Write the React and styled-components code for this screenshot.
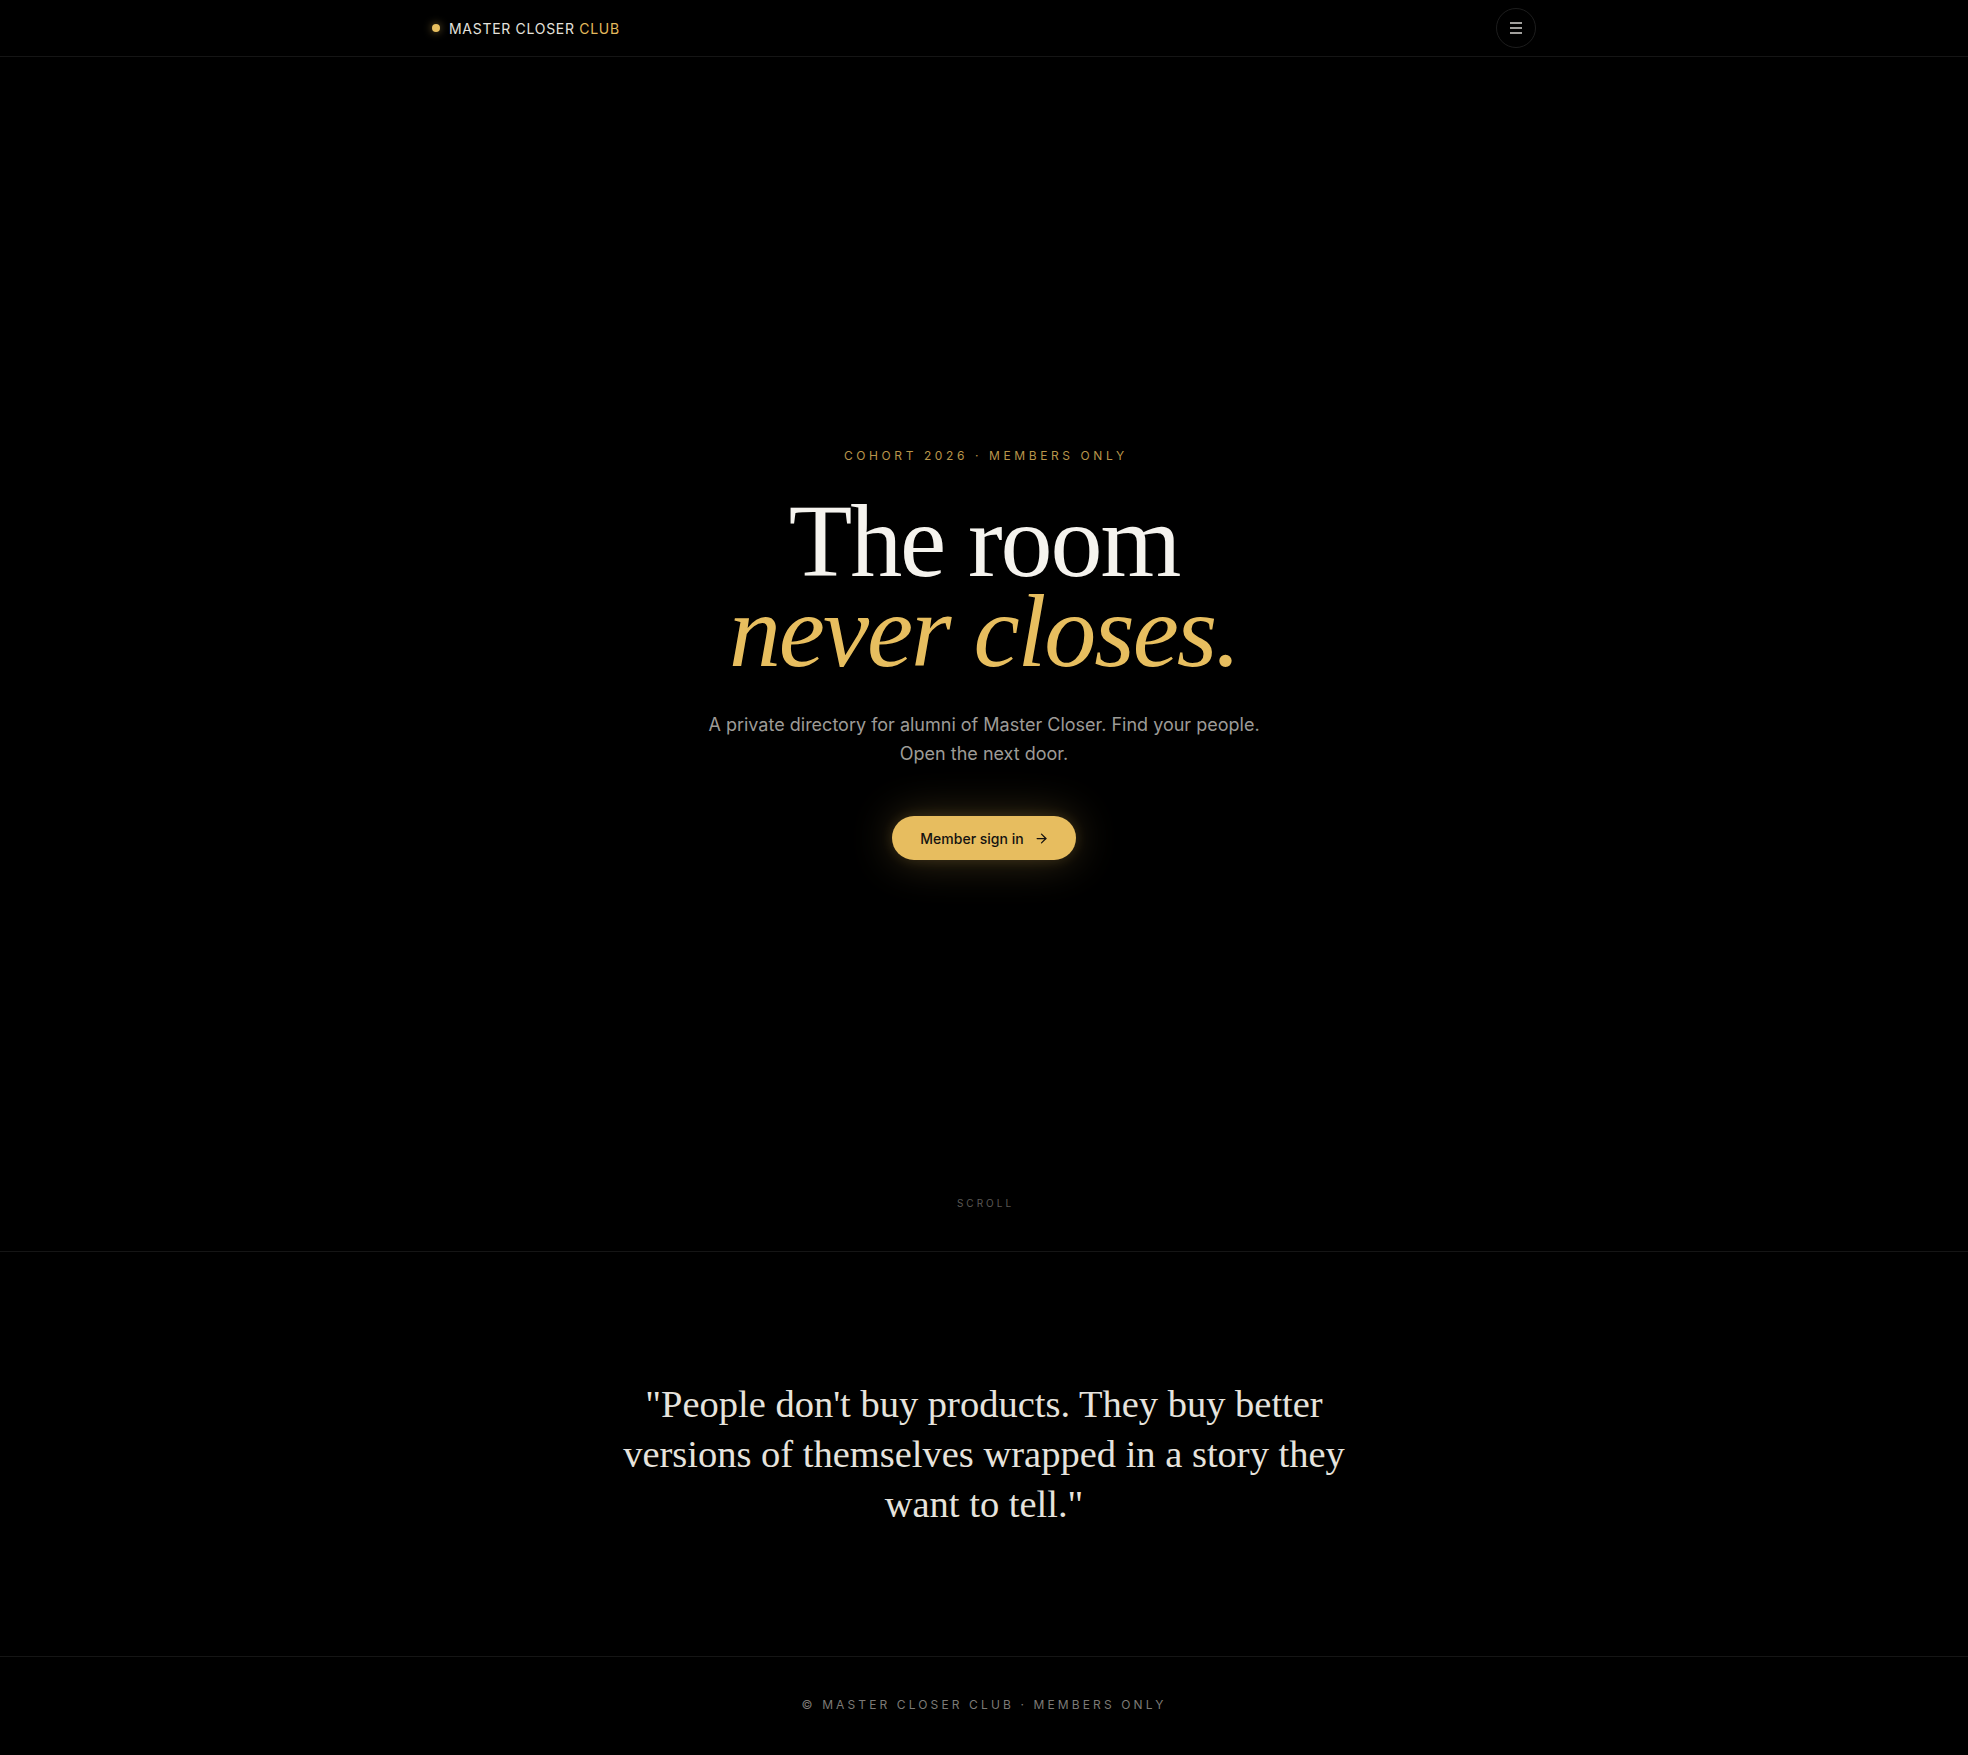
import React from "react";
import styled, { createGlobalStyle } from "styled-components";
import { ArrowRight } from "lucide-react";

const GlobalStyle = createGlobalStyle`
  * {
    box-sizing: border-box;
  }
  body {
    margin: 0;
    background: #000;
    color: #f5f3ee;
    font-family: "Inter", "Noto Sans", sans-serif;
    -webkit-font-smoothing: antialiased;
  }
`;

const MenuIcon = () => (
  <svg width="12" height="12" viewBox="0 0 12 12" fill="none">
    <path d="M0 1h12M0 6h12M0 11h12" stroke="#d6d4cf" strokeWidth="1.4" />
  </svg>
);

export default function App() {
  return (
    <>
      <GlobalStyle />
      <Page>
        <Header>
          <HeaderInner>
            <Brand>
              <BrandDot />
              <BrandName>
                MASTER CLOSER <Gold>CLUB</Gold>
              </BrandName>
            </Brand>
            <MenuButton aria-label="Menu">
              <MenuIcon />
            </MenuButton>
          </HeaderInner>
        </Header>

        <Hero>
          <HeroContent>
            <Eyebrow>COHORT 2026 · MEMBERS ONLY</Eyebrow>
            <Title>
              The room
              <TitleAccent>never closes.</TitleAccent>
            </Title>
            <Lead>
              A private directory for alumni of Master Closer. Find your people.
              Open the next door.
            </Lead>
            <SignInButton>
              Member sign in
              <ArrowRight size={15} strokeWidth={2} />
            </SignInButton>
          </HeroContent>
          <ScrollHint>SCROLL</ScrollHint>
        </Hero>

        <QuoteSection>
          <Quote>
            "People don't buy products. They buy better versions of themselves
            wrapped in a story they want to tell."
          </Quote>
        </QuoteSection>

        <Footer>© MASTER CLOSER CLUB · MEMBERS ONLY</Footer>
      </Page>
    </>
  );
}

const Page = styled.div`
  display: flex;
  flex-direction: column;
  min-height: 100vh;
  background: #000;
`;

const Header = styled.header`
  border-bottom: 1px solid #151515;
`;

const HeaderInner = styled.div`
  max-width: 1152px;
  height: 56px;
  margin: 0 auto;
  padding: 0 24px;
  display: flex;
  align-items: center;
  justify-content: space-between;
`;

const Brand = styled.div`
  display: flex;
  align-items: center;
  gap: 9px;
`;

const BrandDot = styled.span`
  width: 8px;
  height: 8px;
  border-radius: 50%;
  background: #e8bf5f;
  box-shadow: 0 0 8px rgba(232, 191, 95, 0.55);
`;

const BrandName = styled.span`
  font-size: 14px;
  font-weight: 400;
  letter-spacing: 0.05em;
  color: #e4e2dd;
`;

const Gold = styled.span`
  color: #e3b95c;
`;

const MenuButton = styled.button`
  width: 40px;
  height: 40px;
  border-radius: 50%;
  border: 1px solid #1d1d1d;
  background: transparent;
  display: flex;
  align-items: center;
  justify-content: center;
  padding: 0;
  cursor: pointer;
`;

const Hero = styled.section`
  height: 1195px;
  display: grid;
  grid-template-rows: 1fr auto 1fr;
  justify-items: center;
  border-bottom: 1px solid #151515;
  padding: 0 24px;
`;

const HeroContent = styled.div`
  grid-row: 2;
  display: flex;
  flex-direction: column;
  align-items: center;
  text-align: center;
`;

const Eyebrow = styled.div`
  font-size: 12px;
  line-height: 16px;
  letter-spacing: 0.3em;
  color: #b8954a;
  margin-right: -0.3em;
`;

const Title = styled.h1`
  margin: 32px 0 0;
  font-family: "Liberation Serif", "Times New Roman", serif;
  font-weight: 400;
  font-size: 104px;
  line-height: 90px;
  letter-spacing: -0.02em;
  color: #f5f3ee;
  display: flex;
  flex-direction: column;
  align-items: center;
`;

const TitleAccent = styled.em`
  font-style: italic;
  color: #e7be5f;
`;

const Lead = styled.p`
  margin: 34px 0 0;
  max-width: 580px;
  font-size: 18px;
  line-height: 29px;
  color: #9d9b97;
`;

const SignInButton = styled.button`
  margin-top: 48px;
  height: 44px;
  padding: 0 27px 0 28px;
  border: none;
  border-radius: 999px;
  background: #e7bd5f;
  color: #141210;
  font-family: "Inter", sans-serif;
  font-size: 14px;
  font-weight: 500;
  display: flex;
  align-items: center;
  gap: 10px;
  cursor: pointer;
  box-shadow: 0 0 44px rgba(231, 189, 95, 0.26), 0 0 14px rgba(231, 189, 95, 0.16);
`;

const ScrollHint = styled.div`
  grid-row: 3;
  align-self: end;
  padding-bottom: 41px;
  font-size: 10px;
  line-height: 14px;
  letter-spacing: 0.3em;
  margin-right: -0.3em;
  color: #5a5855;
`;

const QuoteSection = styled.section`
  padding: 127px 24px;
  display: flex;
  justify-content: center;
  border-bottom: 1px solid #151515;
`;

const Quote = styled.blockquote`
  margin: 0;
  max-width: 770px;
  text-align: center;
  font-family: "Liberation Serif", "Times New Roman", serif;
  font-size: 38.5px;
  line-height: 50px;
  color: #e6e3dd;
`;

const Footer = styled.footer`
  flex: 1;
  padding: 40px 24px;
  text-align: center;
  font-size: 12px;
  line-height: 16px;
  letter-spacing: 0.26em;
  color: #7c7a76;
`;
